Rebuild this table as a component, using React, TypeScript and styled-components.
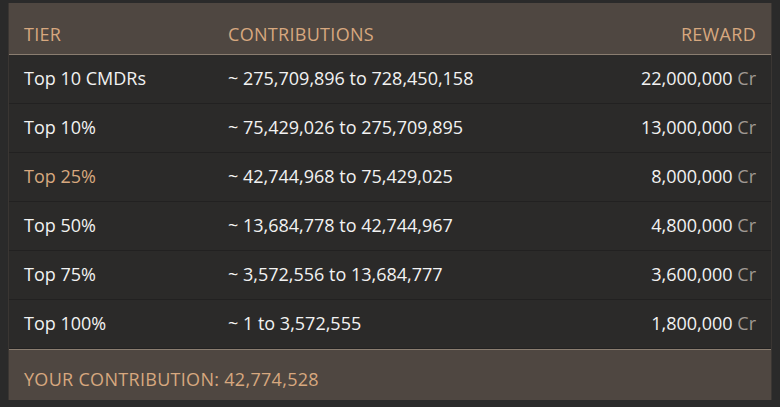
import React from "react";
import styled, { createGlobalStyle } from "styled-components";

const colors = {
  page: "#2a2a2a",
  row: "#2b2a29",
  rowLine: "#222121",
  head: "#4f4741",
  headLine: "#8a7d70",
  accent: "#d7a87f",
  text: "#f2f2f2",
  unit: "#a09a94",
};

const GlobalStyle = createGlobalStyle`
  html, body {
    margin: 0;
    padding: 0;
    background: ${colors.page};
  }
  body {
    font-family: "Open Sans", "Noto Sans", sans-serif;
    font-weight: 500;
  }
`;

const Page = styled.div`
  padding: 3px 8px 7px 8px;
`;

const Panel = styled.div`
  border-left: 1px solid #3a3633;
  border-right: 1px solid #3a3633;
  background: ${colors.row};
`;

const Grid = styled.div`
  display: grid;
  grid-template-columns: 204px 1fr auto;
`;

const HeadRow = styled(Grid)`
  height: 52px;
  box-sizing: border-box;
  align-items: center;
  background: ${colors.head};
  border-bottom: 1px solid ${colors.headLine};
  padding: 11px 15px 1px;
  color: ${colors.accent};
  font-size: 18px;
  letter-spacing: 0.3px;
  text-transform: uppercase;
`;

const Row = styled(Grid)`
  height: 49px;
  box-sizing: border-box;
  align-items: center;
  padding: 0 15px 2px;
  border-bottom: 1px solid ${colors.rowLine};
  font-size: 18px;
  color: ${colors.text};
`;

const Tier = styled.span<{ $highlight?: boolean }>`
  color: ${(p) => (p.$highlight ? colors.accent : colors.text)};
`;

const Right = styled.span`
  text-align: right;
`;

const Unit = styled.span`
  color: ${colors.unit};
`;

const Footer = styled.div`
  height: 51px;
  box-sizing: border-box;
  display: flex;
  align-items: center;
  padding: 9px 15px 1px;
  background: ${colors.head};
  border-top: 1px solid ${colors.headLine};
  color: ${colors.accent};
  font-size: 18px;
  letter-spacing: 0.3px;
  text-transform: uppercase;
`;

const tiers = [
  { tier: "Top 10 CMDRs", range: "~ 275,709,896 to 728,450,158", reward: "22,000,000" },
  { tier: "Top 10%", range: "~ 75,429,026 to 275,709,895", reward: "13,000,000" },
  { tier: "Top 25%", range: "~ 42,744,968 to 75,429,025", reward: "8,000,000", current: true },
  { tier: "Top 50%", range: "~ 13,684,778 to 42,744,967", reward: "4,800,000" },
  { tier: "Top 75%", range: "~ 3,572,556 to 13,684,777", reward: "3,600,000" },
  { tier: "Top 100%", range: "~ 1 to 3,572,555", reward: "1,800,000" },
];

export default function App() {
  return (
    <>
      <GlobalStyle />
      <Page>
        <Panel>
          <HeadRow>
            <span>Tier</span>
            <span>Contributions</span>
            <Right>Reward</Right>
          </HeadRow>
          <div>
            {tiers.map((t) => (
              <Row key={t.tier}>
                <Tier $highlight={t.current}>{t.tier}</Tier>
                <span>{t.range}</span>
                <Right>
                  {t.reward} <Unit>Cr</Unit>
                </Right>
              </Row>
            ))}
          </div>
          <Footer>Your contribution: 42,774,528</Footer>
        </Panel>
      </Page>
    </>
  );
}
